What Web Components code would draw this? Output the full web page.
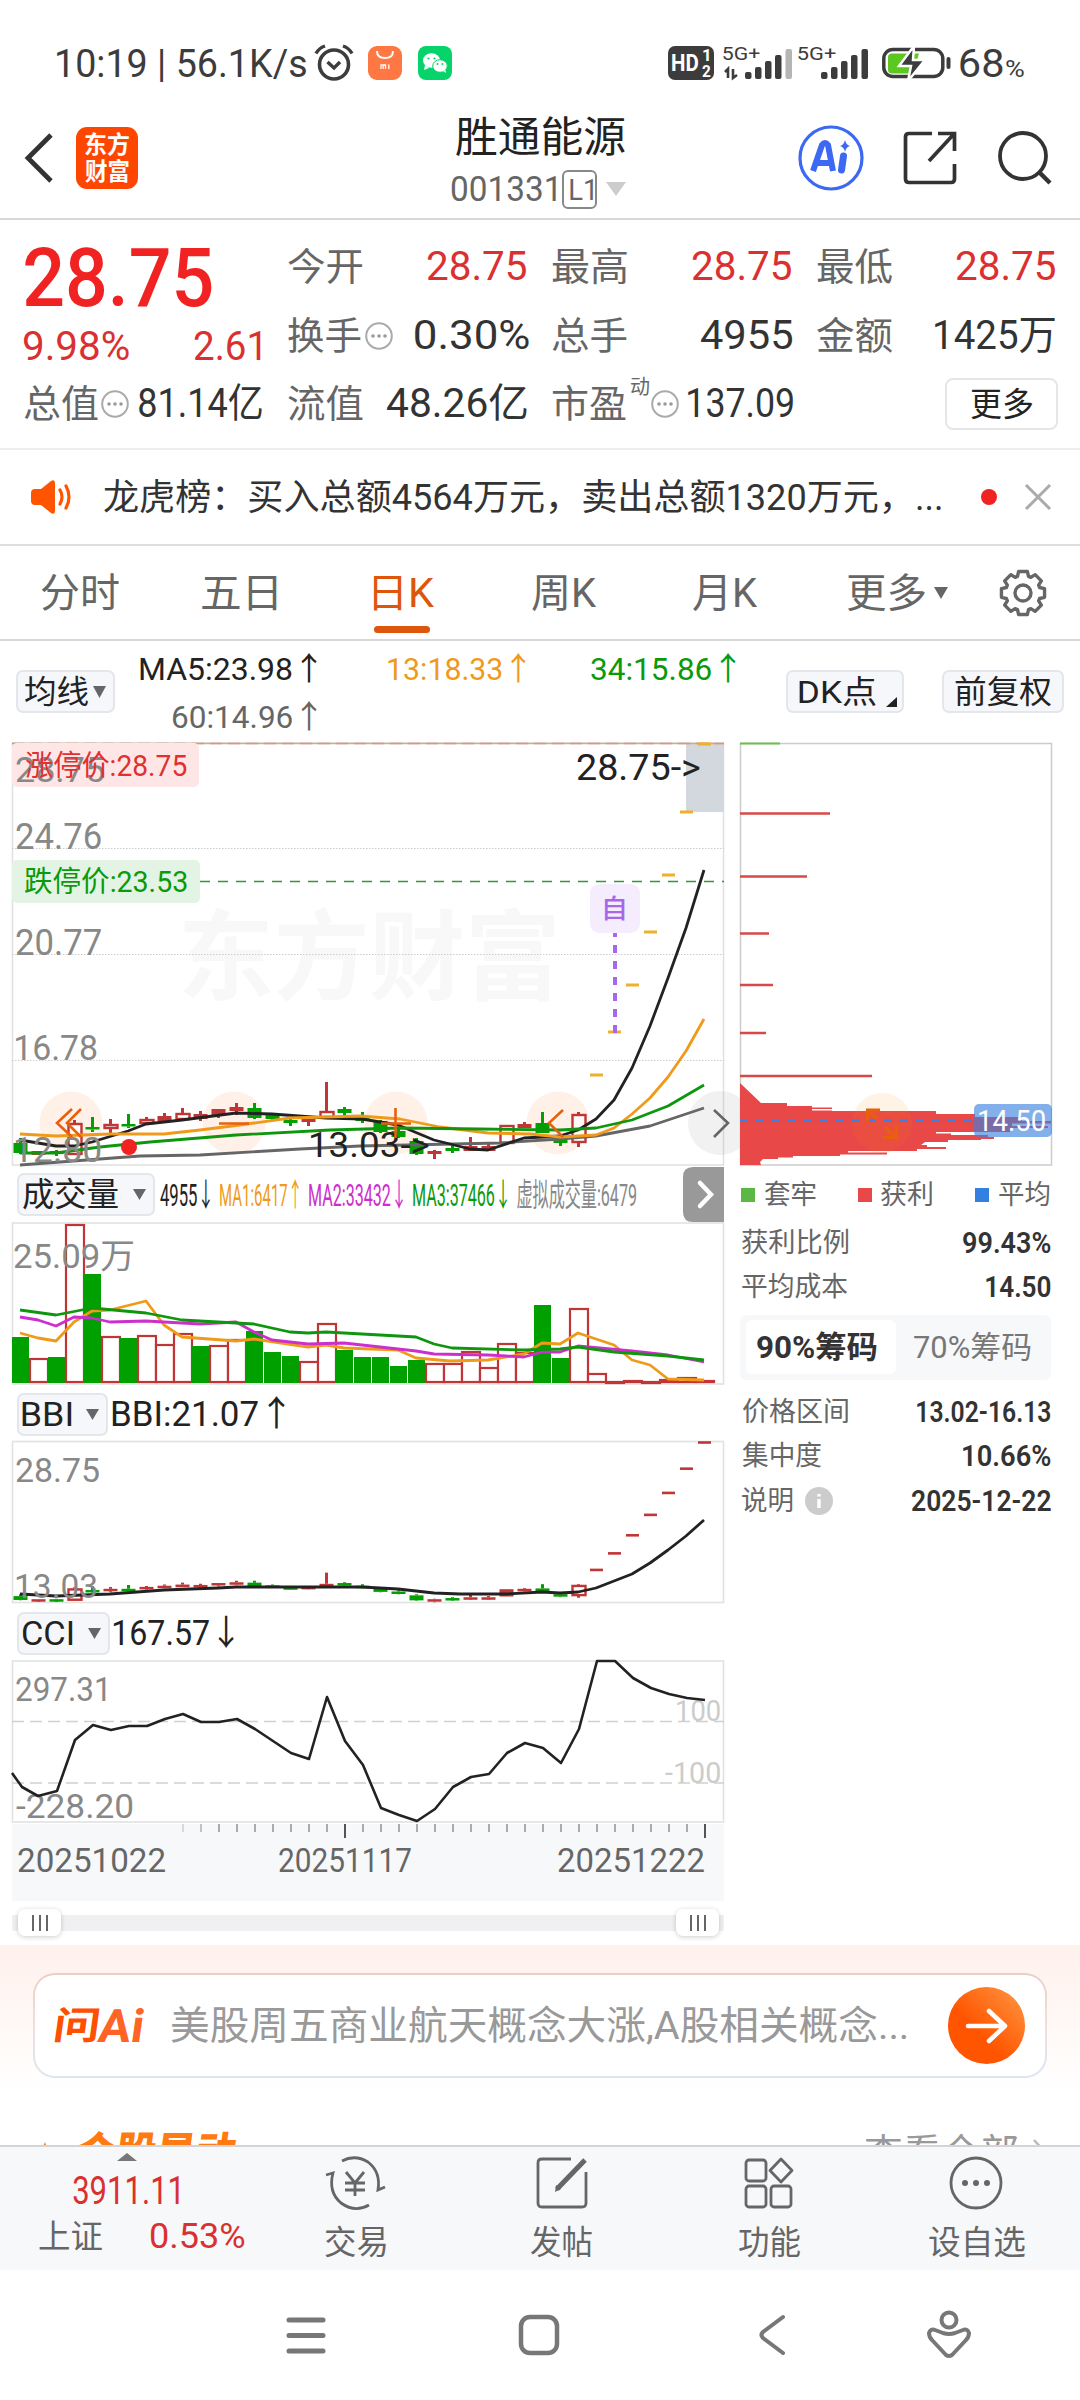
<!DOCTYPE html>
<html lang="zh-CN">
<head>
<meta charset="utf-8">
<title>胜通能源 001331</title>
<style>
html,body{margin:0;padding:0;background:#fff}
body{width:1080px;height:2400px;overflow:hidden;font-family:Roboto,"Noto Sans CJK SC",sans-serif;color:#333}
</style>
</head>
<body>
<stock-app></stock-app>
<script>
const FAMILY = 'Roboto,"Noto Sans CJK SC",sans-serif';
const ctx = document.createElement('canvas').getContext('2d');
function ink(text, size, weight) {
  ctx.font = `${weight} ${size}px ${FAMILY}`;
  const m = ctx.measureText(text);
  return { left: -m.actualBoundingBoxLeft, width: m.actualBoundingBoxLeft + m.actualBoundingBoxRight };
}
const define = (name, cls) => customElements.define(name, cls);
class Base extends HTMLElement {
  connectedCallback() {
    if (this.shadowRoot) return;
    const root = this.attachShadow({ mode: 'open' });
    root.innerHTML = `<style>:host{display:block;box-sizing:border-box}*{box-sizing:border-box}.row{display:flex;align-items:center}.row>*{flex:none}svg{display:block;overflow:visible}${this.css()}</style>${this.html()}`;
  }
  css() { return ''; }
  html() { return ''; }
}

/* Text condensed horizontally so that its drawn width equals w */
define('fit-text', class extends HTMLElement {
  connectedCallback() {
    if (this.shadowRoot) return;
    const s = +this.getAttribute('s'), w = +this.getAttribute('w'), wt = this.getAttribute('wt') || 400;
    const m = ink(this.textContent, s, wt), k = w / m.width;
    this.attachShadow({ mode: 'open' }).innerHTML = `<style>:host{display:block;width:${w}px;height:${s}px;font:${wt} ${s}px/${s}px ${FAMILY};white-space:nowrap}
    span{display:block;width:max-content;transform-origin:0 50%;transform:translateX(${-m.left * k}px) scaleX(${k})}</style><span><slot></slot></span>`;
  }
});
const T = (x, x2, text, s, color = '#666', wt = 400, extra = '') => ({ x, w: x2 - x, h: m => `<fit-text s="${s}" w="${x2 - x}" wt="${wt}" style="color:${color};margin-left:${m}px;${extra}">${text}</fit-text>` });
const I = (x, w, h, inner, extra = '') => ({ x, w, h: m => `<svg width="${w}" height="${h}" viewBox="0 0 ${w} ${h}" fill="none" style="margin-left:${m}px;${extra}">${inner}</svg>` });
const B = (x, w, html, style = '') => ({ x, w, h: m => `<div style="width:${w}px;margin-left:${m}px;${style}">${html}</div>` });
function row(left, height, items, style = '') {
  let p = left, out = '';
  for (const it of items) { out += it.h(+(it.x - p).toFixed(2)); p = it.x + it.w; }
  return `<div class="row" style="height:${height}px;${style}">${out}</div>`;
}
const dots = x => I(x - 14, 28, 28, '<circle cx="14" cy="14" r="12.8" stroke="#aaa" stroke-width="2"/><g fill="#999"><circle cx="8" cy="14" r="1.8"/><circle cx="14" cy="14" r="1.8"/><circle cx="20" cy="14" r="1.8"/></g>');
const tri = (x, w, h, c = '#666') => I(x, w, h, `<path d="M0 0H${w}L${w / 2} ${h}Z" fill="${c}"/>`);

define('status-bar', class extends Base {
  css() { return ':host{height:96px;padding-top:31px}'; }
  html() {
    const bars = last => [[0, 7], [10, 12], [20, 18], [30, 24], [40.5, 30]].map(([x, h], i) => `<rect x="${x}" y="${30 - h}" width="6.5" height="${h}" rx="2" fill="${i === 4 ? last : '#3c3c3c'}"/>`).join('');
    return row(0, 64, [
      T(57, 306, '10:19 | 56.1K/s', 38, '#3c3c3c', 400, 'margin-top:2px'),
      I(314, 40, 38, '<circle cx="20" cy="20.500" r="14.500" stroke="#3c3c3c" stroke-width="3.600"/><path d="M13.500 18l6.500 6 6-6" stroke="#3c3c3c" stroke-width="3.400"/><path d="M2 9.500Q5 4 11 2M38 9.500Q35 4 29 2" stroke="#3c3c3c" stroke-width="3.400"/>'),
      I(368, 34, 34, '<rect width="34" height="34" rx="9" fill="#ff7742"/><path d="M9 5q0 7 8 7t8-7" stroke="#fff" stroke-width="2"/><path d="M13 23v-4h4.500v4M15.200 20v3M20.800 18.500V23" stroke="#fff" stroke-width="1.300"/>'),
      I(418, 34, 34, '<rect width="34" height="34" rx="8" fill="#06d46a"/><ellipse cx="13.500" cy="14.500" rx="8.500" ry="7.300" fill="#fff"/><path d="M7 19l-1 5 5-2z" fill="#fff"/><ellipse cx="22" cy="20" rx="7.300" ry="6.300" fill="#fff" stroke="#06d46a"/><path d="M25 25l3 2-.500-3z" fill="#fff"/><g fill="#06d46a"><circle cx="10.500" cy="12.500" r="1.100"/><circle cx="16.500" cy="12.500" r="1.100"/><circle cx="19.500" cy="18" r="1"/><circle cx="24.500" cy="18" r="1"/></g>'),
      B(668, 46, row(0, 34, [T(4, 30, 'HD', 23, '#fff', 700), B(34, 9, row(0, 16, [T(1, 7, '1', 17, '#fff', 700)]) + row(0, 16, [T(0, 9, '2', 17, '#fff', 700)]))]), 'height:34px;border-radius:7px;background:#3c3c3c'),
      B(722, 69, row(0, 13, [T(1, 38, '5G+', 18, '#3c3c3c')]) + `<svg width="69" height="30" style="margin-top:-12px"><path d="M6 29v-9l-3 3M11 20v9l4-3" stroke="#3c3c3c" stroke-width="2.600" fill="none"/><g transform="translate(23,0)">${bars('#b5b5b5')}</g></svg>`, 'height:31px'),
      B(797, 71, row(0, 13, [T(1, 39, '5G+', 18, '#3c3c3c')]) + `<svg width="71" height="30" style="margin-top:-12px"><g transform="translate(24,0)">${bars('#3c3c3c')}</g></svg>`, 'height:31px'),
      I(882, 69, 32, '<rect x="1.800" y="2.500" width="59" height="27" rx="9" stroke="#3c3c3c" stroke-width="3.500"/><rect x="64.500" y="10" width="4" height="12" rx="2" fill="#3c3c3c"/><path d="M10 6.500h27l-6 20H10q-4 0-4-4v-12q0-4 4-4" fill="#5cc71f"/><path d="M32 -1L17 19h12l-3 15 17-21H31z" fill="#3c3c3c" stroke="#fff" stroke-width="2.500"/>'),
      T(960, 1003, '68', 38, '#3c3c3c', 400, 'margin-top:2px'), T(1006, 1024, '%', 24, '#3c3c3c', 400, 'margin-top:12px')
    ]);
  }
});

define('stock-header', class extends Base {
  css() { return ':host{height:124px;border-bottom:2px solid #d8d8d8;display:flex}'; }
  html() {
    return row(0, 124, [
      I(24, 30, 52, '<path d="M27 3L4 26 27 49" stroke="#333" stroke-width="4.800"/>'),
      B(76, 62, row(0, 27, [T(9, 53, '东方', 24, '#fff', 700)]) + row(0, 27, [T(9, 53, '财富', 24, '#fff', 700)]), 'height:62px;border-radius:11px;background:#ff4600;padding-top:4px')
    ]) + `<div style="width:493px;padding-top:21px">` + row(138, 42, [T(456, 625, '胜通能源', 42, '#222')]) +
      row(138, 40, [T(451, 556, '001331', 35, '#666'), B(562, 35, row(0, 36, [T(6, 29, 'L1', 30, '#666')]), 'height:39px;border:2px solid #888;border-radius:6px;overflow:hidden'), tri(606, 20, 14, '#ccc')], 'margin-top:10px') + '</div>' +
      row(631, 124, [
        I(798, 66, 66, '<circle cx="33" cy="33" r="31" stroke="#3c68f4" stroke-width="3.200"/><path d="M15 46L24 20q3-4 6 0l5 26M19 38h13" stroke="#3c68f4" stroke-width="6"/><path d="M45.500 31l-2 14" stroke="#3c68f4" stroke-width="7" stroke-linecap="round"/><path d="M47 15q1 5 5 6-4 1-5 6-1-5-5-6 4-1 5-6" fill="#3c68f4"/>'),
        I(903, 54, 54, '<path d="M29 2.500H6q-3.500 0-3.500 3.500v42q0 3.500 3.500 3.500h42q3.500 0 3.500-3.500V33M35 2.500h16.500V20M50 4L26 30" stroke="#333" stroke-width="3.700"/>'),
        I(998, 54, 54, '<circle cx="25" cy="25" r="23" stroke="#333" stroke-width="3.800"/><path d="M42 42L52 52" stroke="#333" stroke-width="4.400"/>')
      ]);
  }
});

define('quote-panel', class extends Base {
  css() { return ':host{height:230px;border-bottom:2px solid #eee}.top{display:flex;height:149px}'; }
  html() {
    const R = '#db3030', K = '#333', c = (x, t) => T(x - 1, x + 74, t, 38);
    return `<div class="top"><div style="width:289px;padding-top:18px">` + row(0, 80, [T(25, 212, '28.75', 82, '#f02222', 500)]) +
      row(0, 40, [T(23, 129, '9.98%', 40, R), T(194, 261, '2.61', 40, R)], 'margin-top:9px') + '</div><div style="padding-top:17px">' +
      row(289, 60, [c(289, '今开'), T(427, 526, '28.75', 40, R), c(553, '最高'), T(692, 791, '28.75', 40, R), c(818, '最低'), T(956, 1055, '28.75', 40, R)]) +
      row(289, 60, [T(288, 361, '换手', 38), dots(379), T(415, 529, '0.30%', 40, K), c(553, '总手'), T(701, 792, '4955', 40, K), c(818, '金额'), T(935, 1055, '1425万', 40, K)], 'margin-top:9px') + '</div></div>' +
      row(0, 70, [T(24, 98, '总值', 38), dots(115), T(139, 262, '81.14亿', 40, K), c(289, '流值'), T(387, 527, '48.26亿', 40, K), T(552, 626, '市盈', 38), T(631, 649, '动', 20, '#666', 400, 'margin-top:-34px'), dots(665), T(688, 793, '137.09', 40, K),
        B(945, 113, row(0, 48, [T(24, 86, '更多', 33, '#222')]), 'height:52px;border:2px solid #e4e6e9;border-radius:8px')]);
  }
});

define('notice-bar', class extends Base {
  css() { return ':host{height:96px;border-bottom:2px solid #ddd}'; }
  html() {
    return row(0, 94, [
      I(31, 42, 34, '<path d="M0 13q0-4 4-4h6L20 1q4-2 4 2v28q0 4-4 2L10 25H4q-4 0-4-4z" fill="#ff5500"/><path d="M29 10q4 7 0 14M35 6q6 11 0 22" stroke="#ff5500" stroke-width="3.200" stroke-linecap="round"/>'),
      T(104, 941, '龙虎榜：买入总额4564万元，卖出总额1320万元，...', 36, '#333', 400, 'margin-top:2px'),
      I(981, 16, 16, '<circle cx="8" cy="8" r="8" fill="#f02222"/>'),
      I(1024, 28, 28, '<path d="M2 2L26 26M26 2L2 26" stroke="#aaa" stroke-width="3"/>')
    ]);
  }
});

define('period-tabs', class extends Base {
  css() { return ':host{height:95px;border-bottom:2px solid #d8d8d8}fit-text{margin-top:2px}.bar{width:56px;height:7px;border-radius:4px;background:#dd560c;margin:-14px 0 0 374px}'; }
  html() {
    let g = '';
    for (let i = 0; i < 8; i++) g += `${i ? 'L' : 'M'}${[-4.5, 4.5].map((o, j) => { const a = i * Math.PI / 4 - Math.PI / 2, n = a + Math.PI / 4; return j ? `${24 + 22 * Math.cos(a + .2)} ${24 + 22 * Math.sin(a + .2)}L${24 + 17.5 * Math.cos(a + .32)} ${24 + 17.5 * Math.sin(a + .32)}L${24 + 17.5 * Math.cos(n - .32)} ${24 + 17.5 * Math.sin(n - .32)}` : `${24 + 22 * Math.cos(a - .2)} ${24 + 22 * Math.sin(a - .2)}`; }).join('L')}`;
    return row(0, 94, [
      T(41, 119, '分时', 40), T(202, 277, '五日', 40), T(374, 435, '日K', 40, '#dd560c'), T(532, 597, '周K', 40), T(693, 758, '月K', 40), T(847, 925, '更多', 40), tri(934, 14, 12),
      I(999, 48, 48, `<path d="${g}Z" stroke="#666" stroke-width="3.400" stroke-linejoin="round"/><circle cx="24" cy="24" r="8" stroke="#666" stroke-width="3.400"/>`)
    ]) + '<div class="bar"></div>';
  }
});

const chip = (x, w, items, h = 43) => B(x, w, row(x + 2, h - 4, items), `height:${h}px;border:2px solid #e3e6ea;border-radius:7px;background:#f6f7fa`);
define('ma-legend', class extends Base {
  css() { return ':host{height:101px;display:flex}'; }
  html() {
    return row(0, 101, [chip(16, 99, [T(25, 88, '均线', 32, '#222'), tri(93, 13, 12)])]) +
      `<div style="width:671px;padding-top:11px">` + row(115, 34, [T(140, 317, 'MA5:23.98↑', 32, '#222'), T(388, 526, '13:18.33↑', 32, '#f09a1a'), T(591, 736, '34:15.86↑', 32, '#0a9a0a')]) +
      row(115, 34, [T(173, 317, '60:14.96↑', 32, '#666')], 'margin-top:14px') + '</div>' +
      row(786, 101, [chip(786, 118, [T(799, 876, 'DK点', 32, '#222'), I(886, 11, 10, '<path d="M11 0V10H0Z" fill="#222"/>', 'margin-top:20px')]), chip(942, 122, [T(955, 1051, '前复权', 32, '#222')])]);
  }
});

/* Chart drawing helpers; charts use page coordinates in their viewBox */
const G = '#00a000', RD = '#c03636';
const ST = (x, x2, y, text, s, fill, wt = 400) => { const m = ink(text, s, wt), k = (x2 - x) / m.width; return `<text transform="translate(${x - m.left * k},${y}) scale(${k},1)" font-family='${FAMILY}' font-size="${s}" font-weight="${wt}" fill="${fill}">${text}</text>`; };
const line = (pts, c, w = 2.8) => `<polyline points="${pts}" fill="none" stroke="${c}" stroke-width="${w}" stroke-linejoin="round"/>`;
const frame = (y, y2) => `<rect x="12.500" y="${y}" width="711" height="${y2 - y}" fill="none" stroke="#e2e2e2" stroke-width="1.600"/>`;
const chart = (y, h, inner) => `<svg width="740" height="${h}" viewBox="0 ${y} 740 ${h}">${inner}</svg>`;
/* direction, open/close top, bottom, high, low */
const candles = [['g',1143,1153,1138,1154],['r',1151,1155,1151,1155],['g',1151,1154,1150,1156],['h',1123,1155,1120,1155],['g',1127,1129,1117,1132],['h',1124,1129,1119,1133],['g',1124,1126,1114,1128],['h',1119,1124,1117,1124],['r',1116,1121,1113,1123],['h',1113,1120,1108,1120],['r',1114,1119,1111,1121],['r',1109,1115,1109,1118],['r',1107,1111,1103,1115],['g',1108,1118,1103,1119],['g',1115,1119,1113,1121],['g',1120,1123,1118,1126],['r',1119,1122,1119,1126],['h',1111,1118,1082,1118],['g',1109,1113,1107,1116],['g',1116,1121,1112,1123],['g',1121,1132,1120,1133],['g',1131,1137,1128,1138],['g',1141,1154,1138,1155],['r',1151,1154,1150,1159],['g',1148,1151,1146,1153],['r',1146,1151,1137,1151],['r',1146,1151,1143,1151],['h',1125,1144,1125,1144],['r',1124,1128,1122,1128],['g',1123,1133,1112,1133],['g',1138,1143,1136,1146],['h',1114,1143,1112,1147]];
const limits = [1075, 1032, 985, 932, 875, 812, 744];
function drawCandles(f, min) {
  return candles.map(([t, a, b, hi, lo], i) => {
    const x = 20.5 + 18 * i, c = t === 'g' ? G : RD, y1 = f(a), y2 = Math.max(f(b), y1 + 2.5);
    const hollow = t === 'h' && y2 - y1 > min;
    return `<path d="M${x} ${f(hi)}V${y1}M${x} ${y2}V${f(lo)}" stroke="${c}" stroke-width="3"/>` +
      (hollow ? `<rect x="${x - 6}" y="${y1 + 1}" width="13" height="${y2 - y1 - 2}" fill="#fff" fill-opacity=".7" stroke="${c}" stroke-width="2.400"/>` : `<rect x="${x - 7}" y="${y1}" width="14" height="${y2 - y1}" fill="${c}"/>`);
  }).join('');
}
define('price-chart', class extends Base {
  html() {
    const O = '#e8600c';
    return chart(742, 425,
      ST(183, 555, 992, '东方财富', 98, '#f8f8f8', 700) + frame(743, 1165) +
      [848.5, 954.5, 1060.5].map(y => `<path d="M12 ${y}H724" stroke="#ccc" stroke-dasharray="1.500 1.500"/>`).join('') +
      `<rect x="686" y="743" width="38" height="69" fill="#d3d7de"/><path d="M12 743.500H724" stroke="#c9b190" stroke-width="1.400"/><path d="M12 743.500H724" stroke="#dc9484" stroke-width="1.400" stroke-dasharray="12 6"/><path d="M200 881.500H724" stroke="#2a9a3a" stroke-width="1.300" stroke-dasharray="10 8"/>` +
      [71, 234, 396, 558].map(x => `<circle cx="${x}" cy="1123" r="31.500" fill="#fff0e8"/>`).join('') +
      `<rect x="12" y="743" width="187" height="44" rx="5" fill="#ffe6e6"/><rect x="12" y="860" width="188" height="43" rx="5" fill="#e3f4e4"/>` +
      drawCandles(v => v, 4) + limits.map((y, i) => `<rect x="${590 + 18 * i}" y="${y - 1.5}" width="13" height="3" fill="#efb02c"/>`).join('') +
      line('20,1165 140,1156 200,1155 300,1149 360,1146 500,1143 560,1139 596,1136 650,1126 704,1108', '#666') +
      line('20,1140 56,1146 74,1146 92,1142 128,1131 146,1124 182,1120 236,1113 272,1114 326,1118 362,1119 398,1125 434,1140 470,1149 488,1150 524,1138 560,1136 578,1130 596,1119 614,1100 632,1068 650,1026 668,978 686,928 704,870', '#222') +
      line('20,1134 56,1136 110,1134 164,1134 200,1130 240,1125 290,1118 360,1116 400,1119 440,1127 488,1133 530,1134 560,1137 596,1135 614,1128 632,1114 650,1098 668,1077 686,1051 704,1019', '#f09a1a') +
      line('20,1153 56,1153 100,1147 150,1142 236,1135 330,1130 400,1128 480,1129 560,1130 596,1128 632,1120 668,1106 704,1085', '#0f960f') +
      ST(16, 104, 782, '28.75', 36, '#888') + ST(16, 101, 849, '24.76', 36, '#888') + ST(16, 101, 955, '20.77', 36, '#888') + ST(16, 97, 1060, '16.78', 36, '#888') + ST(16, 101, 1162, '12.80', 36, '#888') +
      ST(25, 187, 776, '涨停价:28.75', 29, '#e03030') + ST(25, 187, 892, '跌停价:23.53', 29, '#0a9a0a') +
      ST(577, 700, 780, '28.75->', 36, '#222') + ST(311, 429, 1157, '13.03->', 36, '#222') +
      `<circle cx="129" cy="1147" r="8" fill="#f02222"/><path d="M615 933V1033" stroke="#a866e8" stroke-width="4" stroke-dasharray="8" stroke-dashoffset="4"/><rect x="590" y="884" width="50" height="49" rx="9" fill="#f5edfe"/>` + ST(605, 625, 918, '自', 26, '#a866e8', 500) +
      `<g fill="none" stroke="${O}" stroke-width="2.600"><path d="M72 1109L57 1123 72 1137M81 1109L67 1123 81 1137M219 1123.500h30M381 1123.500h30M395.500 1108v30M563 1110L549 1123 563 1137"/></g><circle cx="720" cy="1123" r="32" fill="#777" fill-opacity=".1"/><path d="M714 1110L728 1123 714 1137" fill="none" stroke="#666" stroke-width="2.600"/>`);
  }
});
define('volume-chart', class extends Base {
  html() {
    const v = 'g1337 r1358 g1357 r1224 g1274 r1336 g1338 r1335 r1344 r1333 g1346 r1345 r1339 g1331 g1352 g1356 r1361 r1323 g1350 g1357 g1357 g1366 g1360 r1363 r1363 r1351 r1367 r1343 r1352 g1305 g1358 r1308 r1373 r1381 r1380 r1381 r1379 r1377 r1380'.split(' ');
    return chart(1222, 164, frame(1223, 1384) + v.map((d, i) => { const x = 12 + 18 * i, y = +d.slice(1); return d[0] === 'g' ? `<rect x="${x}" y="${y}" width="17" height="${1383 - y}" fill="${G}"/>` : `<rect x="${x}" y="${y + 1}" width="18" height="${Math.max(1, 1382 - y - 1)}" fill="#fff" stroke="${RD}" stroke-width="2.200"/>`; }).join('') +
      line('20,1333 38,1338 56,1341 74,1322 92,1311 110,1310 146,1301 164,1325 182,1337 236,1341 254,1339 308,1347 326,1345 344,1348 398,1350 416,1358 450,1361 488,1360 524,1354 542,1343 560,1344 578,1333 614,1345 632,1360 650,1365 668,1379 704,1380', '#f09a1a') +
      line('20,1317 38,1320 56,1326 74,1317 92,1318 110,1322 146,1321 200,1324 236,1322 254,1332 272,1340 308,1344 344,1343 416,1351 434,1354 488,1355 524,1357 542,1352 560,1352 578,1346 632,1351 668,1355 704,1362', '#cc2fcc') +
      line('20,1310 56,1315 92,1308 146,1313 182,1320 254,1324 290,1332 308,1333 326,1332 416,1337 434,1344 452,1348 524,1350 560,1349 578,1347 614,1352 668,1356 704,1360', '#0f960f') +
      ST(14, 133, 1268, '25.09万', 34, '#888'));
  }
});
define('bbi-chart', class extends Base {
  html() {
    const f = m => 1442.5 + (m - 744) * .385;
    return chart(1440, 164, frame(1441.5, 1602.5) + drawCandles(f, 9) + limits.map((y, i) => `<rect x="${590 + 18 * i}" y="${f(y) - 1.3}" width="13" height="2.600" fill="${RD}"/>`).join('') +
      line('20,1594 56,1596 110,1594 164,1590 218,1588 236,1587 362,1587 398,1589 434,1593 460,1594 506,1594 542,1592 560,1593 578,1592 596,1588 632,1574 650,1563 668,1550 686,1536 704,1520', '#222') +
      ST(16, 99, 1482, '28.75', 34, '#888') + ST(16, 96, 1598, '13.03', 34, '#888'));
  }
});
define('cci-chart', class extends Base {
  html() {
    let t = '';
    for (let i = 0; i < 30; i++) { const x = 183 + 18 * i, big = i === 9 || i === 29; t += `<path d="M${x} 1824V${big ? 1838 : 1832}" stroke="${big ? '#555' : '#999'}" stroke-width="${big ? 2 : 1.6}" opacity="${i === 0 ? .4 : i === 1 ? .7 : 1}"/>`; }
    return chart(1659, 243, `<rect x="12" y="1824" width="712" height="77" fill="#f7f8fa"/>` + frame(1661, 1822) +
      `<path d="M12 1721.500H724M12 1783H724" stroke="#d0d0d0" stroke-width="1.400" stroke-dasharray="12 6"/>` +
      ST(677, 720, 1721, '100', 29, '#ccc') + ST(665, 720, 1783, '-100', 29, '#ccc') + ST(16, 106, 1701, '297.31', 34, '#888') + ST(16, 133, 1818, '-228.20', 34, '#888') +
      line('12,1773 22,1787 38,1796 57,1791 75,1740 93,1725 111,1730 129,1726 147,1726 165,1719 183,1714 201,1722 219,1722 237,1719 255,1729 273,1741 291,1753 309,1759 327,1697 345,1741 363,1765 381,1808 399,1815 417,1821 435,1809 453,1787 471,1777 489,1774 507,1753 525,1743 543,1748 561,1763 579,1729 597,1661 615,1661 633,1678 651,1688 669,1694 687,1698 705,1700', '#222', 2.6) + t +
      ST(18, 165, 1872, '20251022', 34, '#666') + ST(279, 411, 1872, '20251117', 34, '#666') + ST(558, 704, 1872, '20251222', 34, '#666'));
  }
});
define('range-slider', class extends Base {
  css() { return ':host{height:44px;padding:7px 16px 0 12px}.t{height:27px;display:flex;justify-content:space-between;align-items:center;padding:0 5px 0 6px;background:linear-gradient(#f0f0f2,#f0f0f2) 0 6px/100% 16px no-repeat;border-radius:8px}.k{width:43px;height:27px;border-radius:7px;background:#fff;box-shadow:0 1px 5px #0003;display:flex;gap:5px;align-items:center;justify-content:center}i{width:2px;height:16px;background:#666}'; }
  html() { const k = '<div class="k"><i></i><i></i><i></i></div>'; return `<div class="t">${k}${k}</div>`; }
});

define('chip-chart', class extends Base {
  html() {
    return `<svg width="340" height="425" viewBox="740 742 340 425"><rect x="740.500" y="743.500" width="311" height="421.500" fill="none" stroke="#ccc" stroke-width="1.500"/><path d="M740 743.500H780" stroke="#6abf50" stroke-width="2"/><path d="M740 813.500H830M740 876.500H807M740 933.500H769M740 985H773M740 1033H766M740 1076H872" stroke="#d84a4a" stroke-width="2.600"/>
    <path d="M740 1083L761 1103H787V1106H812V1107.500H832V1109H812V1110.500H832V1111H936V1114H975V1117H1022V1121H1051V1123.500H1012V1126H1048V1128H1010V1132H936V1133.500H951V1135H988V1137H994V1139H981V1140H948V1142H925L921 1145H927V1147H946V1149H917V1151H848V1152.500H887V1154.500H840V1156H793V1157.500H778V1159H763L760 1162 761 1165H740Z" fill="#e84848"/>
    <circle cx="882" cy="1123" r="30" fill="#f80" fill-opacity=".1"/><path d="M740 1120.500H974" stroke="#3a80e0" stroke-width="2.400" stroke-dasharray="8"/><path d="M880 1110H867.500V1121M868 1110.500L877 1119M896 1125V1137.500H883M895 1137L885 1127" fill="none" stroke="#e8600c" stroke-width="3"/><rect x="974" y="1104" width="78" height="33" rx="5" fill="#3b82e0" fill-opacity=".63"/>${ST(979, 1045, 1131, '14.50', 29, '#fff')}</svg>`;
  }
});
define('chip-stats', class extends Base {
  css() { return ':host{padding-top:2px}.seg{width:311px;height:65px;border-radius:6px;background:#f7f8fa;margin:5px 0 8px;padding:5px 6px;display:flex}'; }
  html() {
    const r = (x2, l, vx, v, e = [], h = 44.5) => row(740, h, [T(742, x2, l, 27), ...e, T(vx, 1051, v, 29, '#333', 600)]);
    const sq = (x, c) => I(x, 14, 14, `<rect width="14" height="14" fill="${c}"/>`);
    return row(740, 52, [sq(741, '#5bb845'), T(764, 816, '套牢', 27), sq(858, '#e84848'), T(881, 932, '获利', 27), sq(975, '#3480e0'), T(999, 1050, '平均', 27)]) +
      r(848, '获利比例', 963, '99.43%') + r(848, '平均成本', 986, '14.50') +
      `<div class="seg"><div style="width:150px;height:54px;border-radius:6px;background:#fff">${row(746, 55, [T(757, 877, '90%筹码', 31, '#333', 700)])}</div>${row(896, 55, [T(914, 1031, '70%筹码', 31, '#777')])}</div>` +
      `<div style="padding-top:2px">` + r(848, '价格区间', 917, '13.02-16.13') + r(821, '集中度', 963, '10.66%') +
      r(793, '说明', 912, '2025-12-22', [I(805, 28, 28, '<circle cx="14" cy="14" r="14" fill="#ccc"/><path d="M14 7v2.500M14 12v9" stroke="#fff" stroke-width="3.400"/>')]) + '</div>';
  }
});
define('chart-area', class extends Base {
  css() { return ':host{display:flex;height:1203px}.l{width:740px}.r{width:340px}'; }
  html() {
    return `<div class="l"><price-chart></price-chart>` +
      row(0, 55, [chip(17, 138, [T(23, 118, '成交量', 33, '#222'), tri(133, 13, 11)]), T(160, 210, '4955↓', 32, '#222'), T(220, 299, 'MA1:6417↑', 32, '#f09a1a'), T(309, 403, 'MA2:33432↓', 32, '#cc2fcc'), T(413, 507, 'MA3:37466↓', 32, '#0a9a0a'), T(517, 636, '虚拟成交量:6479', 32, '#888'),
        I(683, 41, 55, '<path d="M41 0H10Q0 0 0 10V45Q0 55 10 55H41Z" fill="#999"/><path d="M17 16L28 27.500 17 39" stroke="#fff" stroke-width="4.500" stroke-linecap="round"/>')]) +
      `<volume-chart></volume-chart>` +
      row(0, 54, [chip(17, 91, [T(22, 72, 'BBI', 33, '#222'), tri(86, 13, 11)]), T(112, 285, 'BBI:21.07↑', 35, '#222')], 'padding-top:2px') +
      `<bbi-chart></bbi-chart>` +
      row(0, 55, [chip(17, 93, [T(22, 73, 'CCI', 33, '#222'), tri(88, 13, 11)]), T(113, 234, '167.57↓', 35, '#222')], 'padding-top:3px') +
      `<cci-chart></cci-chart><range-slider></range-slider></div><div class="r"><chip-chart></chip-chart><chip-stats></chip-stats></div>`;
  }
});

define('ask-ai', class extends Base {
  css() { return ':host{height:200px;overflow:hidden;padding-top:28px;background:linear-gradient(#fff1ec,#fff 75%)}.card{width:1014px;height:105px;margin-left:33px;border:2px solid transparent;border-radius:22px;background:linear-gradient(#fff,#fff) padding-box,linear-gradient(#ebcfc6,#f1dfdd 50%,#dbe5f3) border-box}'; }
  html() {
    return `<div class="card">` + row(35, 101, [
      B(56, 88, row(0, 40, [T(0, 42, '问', 38, '#ff5000', 700), T(43, 86, 'Ai', 46, '#ff6326', 700)]), 'transform:skewX(-8deg)'),
      T(171, 907, '美股周五商业航天概念大涨,A股相关概念...', 39, '#999', 400, 'margin-top:2px'),
      I(948, 77, 77, '<defs><linearGradient id="g" x1="0" y1="1" x2="1" y2="0"><stop offset=".4" stop-color="#ff5500"/><stop offset="1" stop-color="#ff9a45"/></linearGradient></defs><circle cx="38.500" cy="38.500" r="38.500" fill="url(#g)"/><path d="M20 39H56M41 24L57 39 41 54" stroke="#fff" stroke-width="4.500" stroke-linecap="round" stroke-linejoin="round"/>')
    ]) + `</div>` + row(0, 42, [I(38, 14, 14, '<path d="M7 0L10 9H3Z" fill="#ff7a10"/>', 'margin-top:-8px'), T(76, 235, '个股异动', 42, '#ff7a10', 900, 'transform:skewX(-8deg)'), T(865, 1018, '查看全部', 38, '#999'), I(1032, 16, 30, '<path d="M2 2L14 15 2 28" stroke="#bbb" stroke-width="2.500"/>')], 'margin-top:54px');
  }
});

define('tool-bar', class extends Base {
  css() { return ':host{height:125px;border-top:2px solid #d4d4d6;background:#f7f8fa;display:flex}.c{padding-top:8px}'; }
  html() {
    const S = 'stroke="#666" stroke-width="2.800"';
    const col = (l, w, ix, icon, a, b, t) => `<div class="c" style="width:${w}px">${row(l, 56, [I(ix, 56, 56, icon)])}${row(l, 36, [T(a, b, t, 33)], 'margin-top:13px')}</div>`;
    return `<div style="width:285px;padding-top:6px">` + row(0, 8, [I(117, 20, 8, '<path d="M10 0L20 8H0Z" fill="#777"/>')]) + row(0, 44, [T(73, 179, '3911.11', 38, '#d93030')], 'margin-top:8px') + row(0, 38, [T(39, 102, '上证', 33), T(150, 245, '0.53%', 35, '#d93030')], 'margin-top:4px') + '</div>' +
      col(285, 175, 327, `<path d="M15 6Q28-1 41 7 54 17 51 35L58 32M42 50Q28 58 14 48 1 37 6 18L-1 20" ${S}/><path d="M19 17L28 28 37 17M28 28V41M18 28H38M18 35H38" ${S}/>`, 325, 386, '交易') +
      col(460, 205, 534, `<path d="M37 4H8Q4 4 4 8V48Q4 52 8 52H48Q52 52 52 48V17" ${S}/><path d="M51 5L23 34" stroke="#666" stroke-width="5"/><path d="M21 37l1-7 5 4z" fill="#666"/>`, 530, 592, '发帖') +
      col(665, 205, 741, `<rect x="5" y="5" width="20" height="21" rx="3" ${S}/><rect x="5" y="31" width="20" height="21" rx="3" ${S}/><rect x="30" y="31" width="20" height="21" rx="3" ${S}/><path d="M40 4L51 15.500 40 27 29 15.500Z" stroke-linejoin="round" ${S}/>`, 739, 800, '功能') +
      col(870, 210, 948, `<circle cx="28" cy="28" r="25" ${S}/><g fill="#666"><circle cx="17" cy="28" r="3"/><circle cx="28" cy="28" r="3"/><circle cx="39" cy="28" r="3"/></g>`, 929, 1025, '设自选');
  }
});
define('system-nav', class extends Base {
  css() { return ':host{height:130px}'; }
  html() {
    const S = 'stroke="#777" stroke-width="4" stroke-linejoin="round" stroke-linecap="round"';
    return row(0, 129, [
      I(286, 40, 40, `<path d="M3 5H37M3 20.500H37M3 36H37" stroke="#777" stroke-width="5" stroke-linecap="round"/>`),
      I(518, 42, 42, `<rect x="3" y="3" width="36" height="36" rx="9" stroke="#777" stroke-width="4.500"/>`),
      I(757, 30, 42, `<path d="M26 3L6 18Q3 21 6 24L26 39" ${S}/>`),
      I(926, 46, 48, `<circle cx="23" cy="10" r="7.500" ${S}/><path d="M3 23Q5 18 9 20L17 23Q23 25 29 23L37 20Q41 18 43 23 43 27 40 30L26 45Q23 47 20 45L6 30Q3 27 3 23Z" ${S}/>`, 'margin-top:-2px')
    ]);
  }
});
define('stock-app', class extends Base {
  css() { return ':host{width:1080px;height:2400px;background:#fff}'; }
  html() { return ['status-bar', 'stock-header', 'quote-panel', 'notice-bar', 'period-tabs', 'ma-legend', 'chart-area', 'ask-ai', 'tool-bar', 'system-nav'].map(n => `<${n}></${n}>`).join(''); }
});
</script>
</body>
</html>
